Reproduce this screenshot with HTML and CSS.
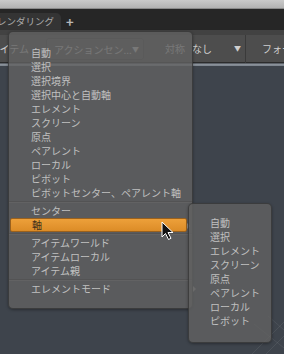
FILE: index.html
```html
<!DOCTYPE html>
<html>

<head>
  <meta charset="UTF-8">
  <meta name="viewport" content="width=device-width, initial-scale=1.0">
  <title>Action Center Menu</title>
  <link rel="stylesheet" href="styles.css">
</head>

<body>
  <div class="screen">
    <div class="titlebar"></div>
    <div class="tabbar">
      <div class="tab">レンダリング</div>
      <div class="tab-add">+</div>
    </div>
    <div class="toolbar">
      <span class="tool-label first">アイテム</span>
      <div class="tool-drop wide">アクションセン...<span class="caret">▼</span></div>
      <span class="tool-label">対称</span>
      <div class="tool-drop narrow">なし<span class="caret">▼</span></div>
      <span class="tool-label last">フォールオフ</span>
    </div>
    <div class="accent-line"></div>
    <div class="viewport">
      <svg class="grid" width="40" height="40" viewBox="0 0 40 40">
        <path d="M40 8 L8 40 M40 22 L22 40 M10 10 L40 34 M24 2 L40 16" stroke="rgba(255,255,255,0.07)" stroke-width="1" fill="none"/>
      </svg>
    </div>

    <ul class="menu main-menu">
      <li>自動</li>
      <li>選択</li>
      <li>選択境界</li>
      <li>選択中心と自動軸</li>
      <li>エレメント</li>
      <li>スクリーン</li>
      <li>原点</li>
      <li>ペアレント</li>
      <li>ローカル</li>
      <li>ピボット</li>
      <li>ピボットセンター、ペアレント軸</li>
      <li class="sep"></li>
      <li>センター</li>
      <li class="active has-sub">軸</li>
      <li class="sep"></li>
      <li>アイテムワールド</li>
      <li>アイテムローカル</li>
      <li>アイテム親</li>
      <li class="sep"></li>
      <li class="has-sub">エレメントモード</li>
    </ul>

    <ul class="menu sub-menu">
      <li>自動</li>
      <li>選択</li>
      <li>エレメント</li>
      <li>スクリーン</li>
      <li>原点</li>
      <li>ペアレント</li>
      <li>ローカル</li>
      <li>ピボット</li>
    </ul>

    <svg class="cursor" width="14" height="20" viewBox="0 0 14 20">
      <path d="M1 1 L1 16 L4.5 12.5 L7.5 18.5 L10 17.3 L7 11.5 L12 11.5 Z" fill="#111" stroke="#fff" stroke-width="1" stroke-linejoin="round"/>
    </svg>
  </div>
</body>

</html>
```

FILE: styles.css
```css
* {
  box-sizing: border-box;
}

body {
  margin: 0;
  background: #3e444c;
  font-family: "Noto Sans CJK JP", "Noto Sans", sans-serif;
  font-size: 10px;
}

.screen {
  position: relative;
  width: 284px;
  height: 354px;
  overflow: hidden;
  display: flex;
  flex-direction: column;
}

.titlebar {
  height: 9px;
  background: linear-gradient(#cacaca, #b2b2b2);
  border-bottom: 1px solid #8a8a8a;
}

.tabbar {
  height: 21px;
  background: #262626;
  display: flex;
  align-items: flex-end;
}

.tab {
  width: 61px;
  height: 17px;
  background: #343434;
  border-top-right-radius: 5px;
  color: #aaaaaa;
  line-height: 16px;
  font-size: 9.5px;
  text-indent: -3px;
  white-space: nowrap;
  overflow: hidden;
}

.tab-add {
  color: #b8b8b8;
  font-size: 13px;
  font-weight: bold;
  line-height: 16px;
  margin-left: 5px;
}

.toolbar {
  height: 33px;
  background: #4d4d4d;
  border-top: 5px solid #424242;
  border-bottom: 1px solid #2c2c2c;
  display: flex;
  align-items: center;
  color: #cfcfcf;
  white-space: nowrap;
}

.toolbar > * {
  flex-shrink: 0;
}

.tool-label {
  line-height: 14px;
}

.tool-label.first {
  margin-left: -10px;
}

.tool-label.last {
  margin-left: 0;
  padding-left: 16px;
  border-left: 1px solid #3a3a3a;
  line-height: 28px;
}

.tool-drop {
  height: 22px;
  line-height: 21px;
  border: 1px solid #3c3c3c;
  border-radius: 3px;
  background: #535353;
  display: flex;
}

.tool-drop.wide {
  width: 98px;
  margin-left: 17px;
  padding-left: 7px;
  margin-right: 21px;
}

.tool-drop.narrow {
  width: 56px;
  margin-left: 4px;
  padding-left: 3px;
  border: none;
  background: none;
}

.caret {
  font-size: 7px;
  margin-left: auto;
  margin-right: 4px;
}

.accent-line {
  height: 3px;
  background: linear-gradient(#3a3e44, #8d949c 40%, #7a828c);
}

.viewport {
  flex: 1;
  position: relative;
  background: #3e444c;
}

.grid {
  position: absolute;
  right: 0;
  bottom: 0;
}

.menu {
  position: absolute;
  margin: 0;
  list-style: none;
  background: rgba(98, 98, 98, 0.8);
  border: 1px solid rgba(34, 34, 34, 0.55);
  border-radius: 5px;
  box-shadow: 0 1px 3px rgba(0, 0, 0, 0.35);
  color: #c0c0c0;
  line-height: 14px;
  white-space: nowrap;
}

.menu li {
  height: 14px;
}

.main-menu {
  left: 8px;
  top: 31px;
  width: 185px;
  padding: 14px 0 12px 0;
}

.main-menu li {
  position: relative;
  padding-left: 22px;
}

.main-menu li.sep {
  height: 4px;
  padding: 0;
  border-top: 1px solid #4c4c4c;
  border-bottom: 1px solid #6a6a6a;
  transform: scaleY(0.5);
}

.main-menu li.active {
  margin: 0 5px 0 1px;
  padding-left: 21px;
  background: linear-gradient(#eda03a, #dc8c27);
  border: 1px solid #9a611d;
  border-radius: 2px;
  color: #3d2f1c;
  line-height: 12px;
}

.main-menu li.has-sub::after {
  content: "";
  position: absolute;
  right: -4px;
  top: 4px;
  border-left: 3px solid #8a8a8a;
  border-top: 3px solid transparent;
  border-bottom: 3px solid transparent;
}

.sub-menu {
  left: 188px;
  top: 203px;
  width: 84px;
  padding: 12px 0 14px 21px;
}

.cursor {
  position: absolute;
  left: 161px;
  top: 221px;
}
```
